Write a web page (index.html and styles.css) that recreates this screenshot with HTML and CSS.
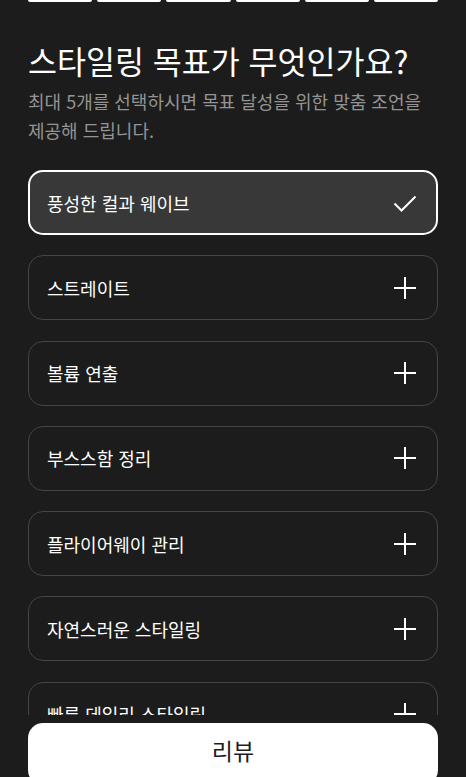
FILE: index.html
```html
<!DOCTYPE html>
<html lang="ko">
<head>
    <meta charset="UTF-8">
    <meta name="viewport" content="width=device-width, initial-scale=1.0">
    <title>스타일링 목표</title>
    <link rel="stylesheet" href="styles.css">
</head>
<body>
    <div class="screen">
        <div class="progress">
            <span></span><span></span><span></span><span></span><span></span><span></span>
        </div>

        <div class="header">
            <h1>스타일링 목표가 무엇인가요?</h1>
            <p>최대 5개를 선택하시면 목표 달성을 위한 맞춤 조언을 제공해 드립니다.</p>
        </div>

        <div class="goal-list">
            <div class="goal selected">
                <span>풍성한 컬과 웨이브</span>
                <svg class="icon" viewBox="0 0 24 24"><path d="M1.5 12.5 L8.5 19.5 L22.5 5.5"/></svg>
            </div>
            <div class="goal">
                <span>스트레이트</span>
                <svg class="icon" viewBox="0 0 24 24"><path d="M12 1 V23 M1 12 H23"/></svg>
            </div>
            <div class="goal">
                <span>볼륨 연출</span>
                <svg class="icon" viewBox="0 0 24 24"><path d="M12 1 V23 M1 12 H23"/></svg>
            </div>
            <div class="goal">
                <span>부스스함 정리</span>
                <svg class="icon" viewBox="0 0 24 24"><path d="M12 1 V23 M1 12 H23"/></svg>
            </div>
            <div class="goal">
                <span>플라이어웨이 관리</span>
                <svg class="icon" viewBox="0 0 24 24"><path d="M12 1 V23 M1 12 H23"/></svg>
            </div>
            <div class="goal">
                <span>자연스러운 스타일링</span>
                <svg class="icon" viewBox="0 0 24 24"><path d="M12 1 V23 M1 12 H23"/></svg>
            </div>
            <div class="goal">
                <span>빠른 데일리 스타일링</span>
                <svg class="icon" viewBox="0 0 24 24"><path d="M12 1 V23 M1 12 H23"/></svg>
            </div>
        </div>

        <div class="footer">
            <button class="review-button">리뷰</button>
        </div>
    </div>
</body>
</html>
```

FILE: styles.css
```css
body {
    font-family: "Noto Sans CJK KR", "Noto Sans", sans-serif;
    margin: 0;
    padding: 0;
    background-color: #1c1c1c;
    color: #fff;
}

.screen {
    height: 777px;
    overflow: hidden;
    padding: 0 28px;
}

.progress {
    display: flex;
    gap: 5px;
    height: 2px;
}

.progress span {
    flex: 1;
    background-color: #fff;
    border-radius: 0 0 2px 2px;
}

.header {
    margin-top: 36px;
}

.header h1 {
    font-size: 31.5px;
    font-weight: 400;
    line-height: 44px;
    margin: 0;
}

.header p {
    font-size: 18px;
    line-height: 29px;
    color: #949494;
    margin: 5px 0 0;
    word-break: keep-all;
}

.goal-list {
    margin-top: 25px;
    height: 545px;
    overflow: hidden;
    display: flex;
    flex-direction: column;
    gap: 20.3px;
}

.goal {
    flex: 0 0 auto;
    height: 63px;
    border: 1px solid #454545;
    border-radius: 15px;
    display: flex;
    align-items: center;
    justify-content: space-between;
    padding: 0 20px 0 18px;
    font-size: 18px;
}

.goal.selected {
    border: 2px solid #fff;
    height: 61px;
    background-color: #383838;
    padding: 0 19px 0 17px;
}

.icon {
    width: 24px;
    height: 24px;
    fill: none;
    stroke: #fff;
    stroke-width: 2;
}

.footer {
    margin-top: 8px;
}

.review-button {
    width: 100%;
    height: 62px;
    border: none;
    border-radius: 15px;
    background-color: #fff;
    color: #1c1c1c;
    font-family: inherit;
    font-size: 23px;
    font-weight: 400;
    padding: 0 0 8px;
}
```
